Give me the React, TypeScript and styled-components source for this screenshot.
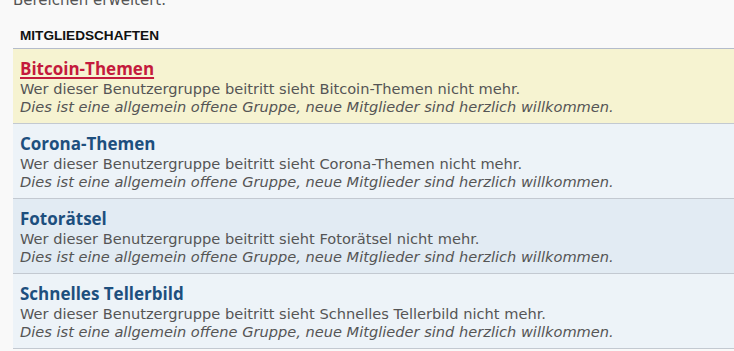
import React from "react";
import styled, { createGlobalStyle } from "styled-components";

const Global = createGlobalStyle`
  html, body {
    margin: 0;
    padding: 0;
    background: #f9f9f9;
    overflow: hidden;
  }
`;

const Page = styled.div`
  width: 760px;
  padding-left: 13px;
  margin-top: -9px;
  font-family: "DejaVu Sans", Verdana, sans-serif;
`;

const Intro = styled.p`
  margin: 0;
  font-size: 15px;
  line-height: 18px;
  color: #555;
`;

const Heading = styled.h3`
  margin: 0;
  padding: 19px 0 0 7px;
  height: 40px;
  box-sizing: border-box;
  font-family: "Liberation Sans", Arial, sans-serif;
  font-weight: bold;
  font-size: 13.6px;
  line-height: 16px;
  color: #111;
  border-bottom: 1px solid #b4bccb;
`;

const List = styled.ul`
  list-style: none;
  margin: 0;
  padding: 0;
`;

type Tone = "active" | "plain" | "shade";

const tones: Record<Tone, string> = {
  active: "#f6f3d1",
  plain: "#edf3f8",
  shade: "#e2ebf3",
};

const Row = styled.li<{ $tone: Tone }>`
  height: 75px;
  box-sizing: border-box;
  padding: 9px 0 0 7px;
  background: ${(p) => tones[p.$tone]};
  border-bottom: 1px solid #c3c9d1;
`;

const Title = styled.a<{ $active?: boolean }>`
  display: inline-block;
  font-family: "Open Sans", sans-serif;
  font-weight: 700;
  font-size: 17px;
  line-height: 22px;
  color: ${(p) => (p.$active ? "#c41a3c" : "#1d4f7e")};
  text-decoration: ${(p) => (p.$active ? "underline" : "none")};
  text-decoration-thickness: 2px;
  text-underline-offset: 2px;
  cursor: pointer;
`;

const Line = styled.div<{ $italic?: boolean }>`
  font-size: 14.6px;
  line-height: 18px;
  color: #555;
  font-style: ${(p) => (p.$italic ? "italic" : "normal")};
`;

const groups = [
  { name: "Bitcoin-Themen", tone: "active" as Tone },
  { name: "Corona-Themen", tone: "plain" as Tone },
  { name: "Fotorätsel", tone: "shade" as Tone },
  { name: "Schnelles Tellerbild", tone: "plain" as Tone },
];

export default function App() {
  return (
    <>
      <Global />
      <Page>
        <Intro>Bereichen erweitert.</Intro>
        <Heading>MITGLIEDSCHAFTEN</Heading>
        <List>
          {groups.map((g) => (
            <Row key={g.name} $tone={g.tone}>
              <Title $active={g.tone === "active"}>{g.name}</Title>
              <Line>
                Wer dieser Benutzergruppe beitritt sieht {g.name} nicht mehr.
              </Line>
              <Line $italic>
                Dies ist eine allgemein offene Gruppe, neue Mitglieder sind
                herzlich willkommen.
              </Line>
            </Row>
          ))}
        </List>
      </Page>
    </>
  );
}
